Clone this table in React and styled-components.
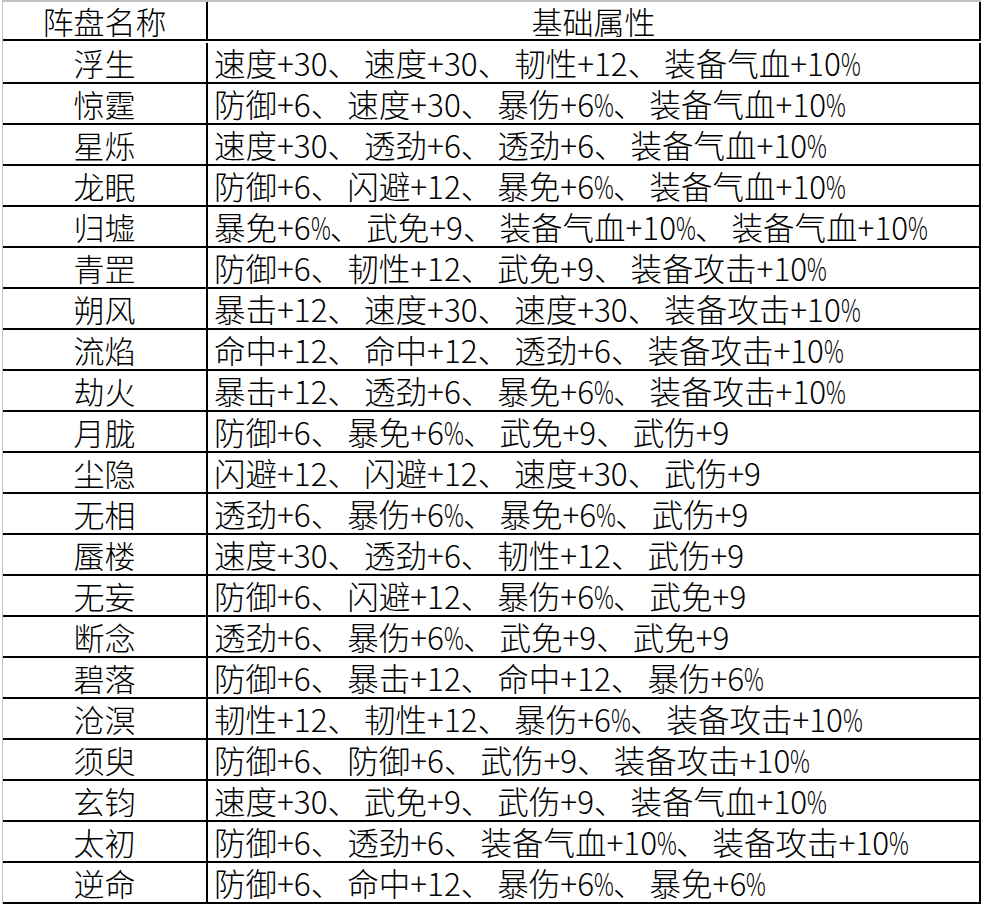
import React from 'react';
import styled, {createGlobalStyle} from 'styled-components';

const GlobalStyle = createGlobalStyle`
  html, body {
    margin: 0;
    padding: 0;
    background: #ffffff;
  }
  body {
    font-family: "Noto Sans CJK SC", "Noto Sans", sans-serif;
    color: #000;
  }
`;

const rows = [
  ['浮生', '速度+30、速度+30、韧性+12、装备气血+10%'],
  ['惊霆', '防御+6、速度+30、暴伤+6%、装备气血+10%'],
  ['星烁', '速度+30、透劲+6、透劲+6、装备气血+10%'],
  ['龙眠', '防御+6、闪避+12、暴免+6%、装备气血+10%'],
  ['归墟', '暴免+6%、武免+9、装备气血+10%、装备气血+10%'],
  ['青罡', '防御+6、韧性+12、武免+9、装备攻击+10%'],
  ['朔风', '暴击+12、速度+30、速度+30、装备攻击+10%'],
  ['流焰', '命中+12、命中+12、透劲+6、装备攻击+10%'],
  ['劫火', '暴击+12、透劲+6、暴免+6%、装备攻击+10%'],
  ['月胧', '防御+6、暴免+6%、武免+9、武伤+9'],
  ['尘隐', '闪避+12、闪避+12、速度+30、武伤+9'],
  ['无相', '透劲+6、暴伤+6%、暴免+6%、武伤+9'],
  ['蜃楼', '速度+30、透劲+6、韧性+12、武伤+9'],
  ['无妄', '防御+6、闪避+12、暴伤+6%、武免+9'],
  ['断念', '透劲+6、暴伤+6%、武免+9、武免+9'],
  ['碧落', '防御+6、暴击+12、命中+12、暴伤+6%'],
  ['沧溟', '韧性+12、韧性+12、暴伤+6%、装备攻击+10%'],
  ['须臾', '防御+6、防御+6、武伤+9、装备攻击+10%'],
  ['玄钧', '速度+30、武免+9、武伤+9、装备气血+10%'],
  ['太初', '防御+6、透劲+6、装备气血+10%、装备攻击+10%'],
  ['逆命', '防御+6、命中+12、暴伤+6%、暴免+6%'],
];

//Sheet holds the whole bordered table
const Sheet = styled.div`
  display: grid;
  grid-template-columns: 205px 773px;
  grid-auto-rows: 41px;
  margin-left: 2px;
  width: 978px;
  border-left: 1px solid #c4c4c4;
  border-top: 2px solid #c0c0c0;
`;

const Cell = styled.div`
  box-sizing: border-box;
  display: flex;
  align-items: center;
  justify-content: ${p => (p.$center ? 'center' : 'flex-start')};
  padding-left: ${p => (p.$center ? '0' : '6px')};
  height: ${p => (p.$head ? '39px' : '41px')};
  border-bottom: 2px solid #000;
  border-right: 2px solid #000;
  font-size: ${p => (p.$center ? '31px' : '31.5px')};
  font-weight: 300;
  line-height: 1.2;
  white-space: nowrap;
`;

//the 、 in the sheet font sits in a wider box
const Sep = styled.span`
  margin-right: 5px;
`;

//narrow percent sign
const Pct = styled.span`
  display: inline-block;
  width: 19px;
  transform: scaleX(0.7);
  transform-origin: left center;
`;

function Attrs({text}) {
  return text.split(/(、|%)/).map((part, i) => {
    if (part === '、') return <Sep key={i}>、</Sep>;
    if (part === '%') return <Pct key={i}>%</Pct>;
    return part;
  });
}

export default function App() {
  return (
    <>
      <GlobalStyle />
      <Sheet>
        <Cell $head $center>
          阵盘名称
        </Cell>
        <Cell $head $center>
          基础属性
        </Cell>
        {rows.map(([name, attrs]) => (
          <React.Fragment key={name}>
            <Cell $center>{name}</Cell>
            <Cell>
              <Attrs text={attrs} />
            </Cell>
          </React.Fragment>
        ))}
      </Sheet>
    </>
  );
}
